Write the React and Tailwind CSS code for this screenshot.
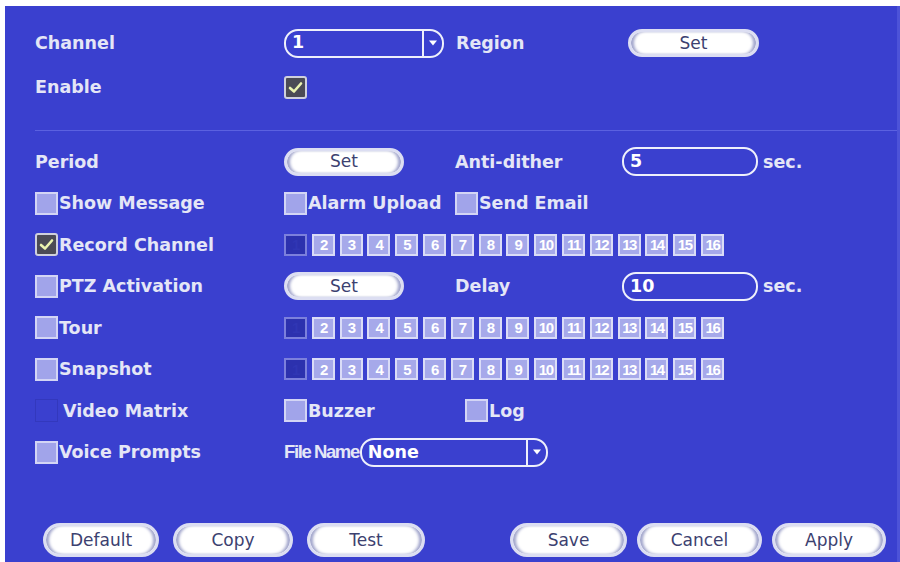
const font = { fontFamily: '"DejaVu Sans", "Liberation Sans", sans-serif' };

const Check = ({ checked, ghost }) => {
  if (ghost) return <span className="w-[23px] h-[23px] border border-[#3338bd] shrink-0" />;
  if (checked)
    return (
      <span className="w-[23px] h-[23px] rounded-[3px] border-2 border-[#cfd0dc] bg-[#4b4b55] flex items-center justify-center shrink-0">
        <svg width="15" height="13" viewBox="0 0 15 13">
          <path d="M2 7 L6 10.5 L13 2.5" fill="none" stroke="#eaf3b0" strokeWidth="2.6" strokeLinecap="round" strokeLinejoin="round" />
        </svg>
      </span>
    );
  return <span className="w-[23px] h-[23px] border-2 border-[#d3d5f5] bg-[#a1a4ea] shrink-0" />;
};

const Pill = ({ label, w = 'w-[120px]', h = 'h-[28px]' }) => (
  <button
    className={`${w} ${h} rounded-full bg-white border-[3px] border-[#dcdef2] shadow-[inset_4px_0_3px_-1px_#a2a6cc,inset_-4px_0_3px_-1px_#a2a6cc] text-[#3c4170] text-[17px] font-normal leading-none flex items-center justify-center`}
  >
    {label}
  </button>
);

const Field = ({ value, w, arrow }) => (
  <div className={`${w} h-[29px] rounded-[14px] border-2 border-[#eef0fb] flex items-center`}>
    <span className="flex-1 pl-[6px] text-white leading-none">{value}</span>
    {arrow && (
      <span className="h-full flex items-center border-l-2 border-[#eef0fb] px-[4px]">
        <svg width="10" height="8" viewBox="0 0 10 8">
          <path d="M1 1.5 H9 L5 6.5 Z" fill="#ffffff" />
        </svg>
      </span>
    )}
  </div>
);

const Channels = () => (
  <div className="flex gap-[4.8px]">
    {Array.from({ length: 16 }, (_, i) => i + 1).map((n) => (
      <span
        key={n}
        className={`w-[23px] h-[22px] border-2 flex items-center justify-center text-[15px] font-bold tracking-[-1.5px] leading-none ${
          n === 1 ? 'bg-[#2c31ae] border-[#7c80dc] text-[#3036b4]' : 'bg-[#a6a9ea] border-[#dadcf7] text-white'
        }`}
        style={{ fontFamily: '"Liberation Sans", sans-serif' }}
      >
        {n}
      </span>
    ))}
  </div>
);

const Row = ({ h = 'h-[41.5px]', children }) => <div className={`flex items-center ${h}`}>{children}</div>;
const C1 = ({ children }) => <div className="w-[249px] flex items-center shrink-0">{children}</div>;
const C2 = ({ children }) => <div className="w-[171px] flex items-center shrink-0">{children}</div>;
const C3 = ({ children }) => <div className="w-[167px] flex items-center shrink-0">{children}</div>;

const CheckLabel = ({ label, checked, ghost, gap = '' }) => (
  <span className="flex items-center">
    <Check checked={checked} ghost={ghost} />
    <span className={`ml-[1px] ${gap}`}>{label}</span>
  </span>
);

export default function App() {
  return (
    <div className="w-[900px] h-[562px] bg-white pt-[6px] pl-[5px] overflow-hidden" style={font}>
      <div className="h-[556px] bg-[#3a40cf] border-r-[3px] border-[#4d53d8] flex flex-col pl-[30px] text-[17.5px] font-bold text-[#e4e6f6]">
        <div className="pt-[15px]">
          <Row h="h-[44px]">
            <C1>Channel</C1>
            <Field value="1" w="w-[160px]" arrow />
            <span className="ml-[12px] w-[172px]">Region</span>
            <Pill label="Set" w="w-[131px]" />
          </Row>
          <Row h="h-[44px]">
            <C1>Enable</C1>
            <Check checked />
          </Row>
        </div>
        <div className="mt-[21px] h-[1px] bg-[#5b61e0]" />
        <div className="mt-[10px]">
          <Row>
            <C1>Period</C1>
            <C2><Pill label="Set" /></C2>
            <C3>Anti-dither</C3>
            <Field value="5" w="w-[136px]" />
            <span className="ml-[5px]">sec.</span>
          </Row>
          <Row>
            <C1><CheckLabel label="Show Message" /></C1>
            <C2><CheckLabel label="Alarm Upload" /></C2>
            <CheckLabel label="Send Email" />
          </Row>
          <Row>
            <C1><CheckLabel label="Record Channel" checked /></C1>
            <Channels />
          </Row>
          <Row>
            <C1><CheckLabel label="PTZ Activation" /></C1>
            <C2><Pill label="Set" /></C2>
            <C3>Delay</C3>
            <Field value="10" w="w-[136px]" />
            <span className="ml-[5px]">sec.</span>
          </Row>
          <Row>
            <C1><CheckLabel label="Tour" /></C1>
            <Channels />
          </Row>
          <Row>
            <C1><CheckLabel label="Snapshot" /></C1>
            <Channels />
          </Row>
          <Row>
            <C1><CheckLabel label="Video Matrix" ghost gap="ml-[5px]" /></C1>
            <div className="w-[181px] shrink-0"><CheckLabel label="Buzzer" /></div>
            <CheckLabel label="Log" />
          </Row>
          <Row>
            <C1><CheckLabel label="Voice Prompts" /></C1>
            <span
              className="shrink-0 text-[18.5px] tracking-[-1.4px] whitespace-nowrap mr-[1px]"
              style={{ fontFamily: '"Liberation Sans", sans-serif' }}
            >
              File Name
            </span>
            <Field value="None" w="w-[188px]" arrow />
          </Row>
        </div>
        <div className="mt-auto mb-[5px] flex items-center pl-[8px]">
          <div className="flex gap-[14px]">
            <Pill label="Default" w="w-[116px]" h="h-[34px]" />
            <Pill label="Copy" w="w-[120px]" h="h-[34px]" />
            <Pill label="Test" w="w-[118px]" h="h-[34px]" />
          </div>
          <div className="ml-[85px] flex gap-[10px]">
            <Pill label="Save" w="w-[117px]" h="h-[34px]" />
            <Pill label="Cancel" w="w-[125px]" h="h-[34px]" />
            <Pill label="Apply" w="w-[114px]" h="h-[34px]" />
          </div>
        </div>
      </div>
    </div>
  );
}
